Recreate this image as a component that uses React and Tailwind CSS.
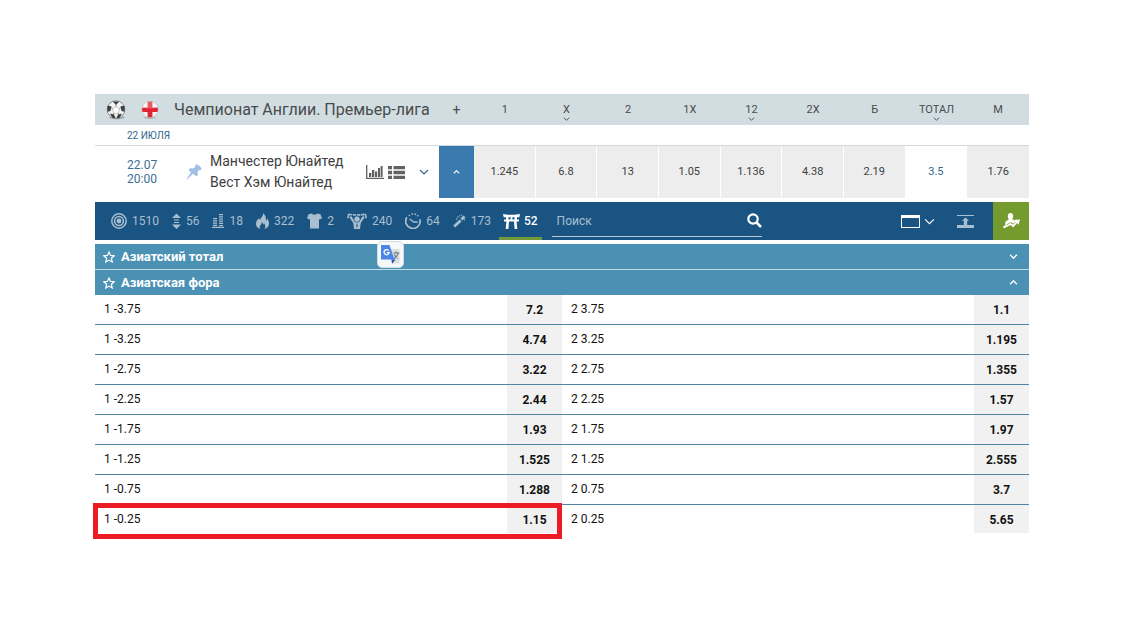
import React from 'react';

const columns = [
  { label: '1', odd: '1.245' },
  { label: 'X', odd: '6.8', menu: true },
  { label: '2', odd: '13' },
  { label: '1X', odd: '1.05' },
  { label: '12', odd: '1.136', menu: true },
  { label: '2X', odd: '4.38' },
  { label: 'Б', odd: '2.19' },
  { label: 'ТОТАЛ', odd: '3.5', menu: true, line: true },
  { label: 'М', odd: '1.76' },
];

const handicaps = [
  ['1 -3.75', '7.2', '2 3.75', '1.1'],
  ['1 -3.25', '4.74', '2 3.25', '1.195'],
  ['1 -2.75', '3.22', '2 2.75', '1.355'],
  ['1 -2.25', '2.44', '2 2.25', '1.57'],
  ['1 -1.75', '1.93', '2 1.75', '1.97'],
  ['1 -1.25', '1.525', '2 1.25', '2.555'],
  ['1 -0.75', '1.288', '2 0.75', '3.7'],
  ['1 -0.25', '1.15', '2 0.25', '5.65'],
];

function Chevron({ up = false, className = 'w-2.5 h-1.5', stroke = 1.4 }) {
  return (
    <svg viewBox="0 0 10 6" className={className} fill="none" stroke="currentColor" strokeWidth={stroke} aria-hidden="true">
      <path d={up ? 'M1 5L5 1L9 5' : 'M1 1L5 5L9 1'} />
    </svg>
  );
}

function BallIcon() {
  return (
    <svg viewBox="0 0 20 20" className="h-5 w-5" aria-hidden="true">
      <ellipse cx="11" cy="17.6" rx="8" ry="1.8" fill="#8e9698" opacity=".6" />
      <circle cx="10" cy="9.6" r="8.8" fill="#f4f4f4" stroke="#777" strokeWidth=".8" />
      <path d="M10 6.4l3.6 2.6-1.4 4.3H7.8L6.4 9z" fill="#fff" stroke="#aaa" strokeWidth=".6" />
      <path d="M6.6 1.4h6.800L10 5z M1.4 5.800L5.400 6.200 4.600 11 1.4 11.800z M18.600 5.800L14.600 6.200l.8 4.800 3.200.8z M4 13.800l3.800.2 1.800 4.200-3-.2z M16 13.800l-3.800.2-1.800 4.200 3-.2z" fill="#3e4244" />
      <path d="M10 4.4v2.2M5 7l1.6 2M15 7l-1.6 2M7.7 13.4L6.4 15M12.3 13.4l1.3 1.6" stroke="#777" strokeWidth=".8" />
    </svg>
  );
}

function EnglandIcon() {
  return (
    <svg viewBox="0 0 18 18" className="h-[18px] w-[18px]" aria-hidden="true">
      <ellipse cx="9" cy="16.8" rx="6" ry="1.1" fill="#98a4a8" opacity=".7" />
      <clipPath id="flag-round"><circle cx="9" cy="8.5" r="8.2" /></clipPath>
      <g clipPath="url(#flag-round)">
        <rect width="18" height="18" fill="#f2f2f2" />
        <path d="M6.600 0h4.800v18H6.600z M0 6.500h18v4.600H0z" fill="#e02431" />
        <path d="M0 0h18v6Q9 9 0 6z" fill="#fff" opacity=".25" />
      </g>
      <circle cx="9" cy="8.5" r="8.2" fill="none" stroke="#b9b9b9" strokeWidth=".6" />
    </svg>
  );
}

function PinIcon() {
  return (
    <svg viewBox="0 0 16 16" className="h-4 w-4" fill="#9fc0e2" aria-hidden="true">
      <path d="M9.600.8C10.700.2 12 .9 13.400 2c1.500 1.200 2.300 2.500 1.900 3.400-.3.600-1.300.700-2.200.600L11.500 8c.5 1.700.5 3.300-.4 4-.6.400-1.400 0-2.200-.7L6.900 9.800 1.100 15.500.4 15.300l4.700-7-1.300-1.100C2.800 6.300 2.500 5.500 3.100 4.900c.9-.9 2.300-.8 4-.3l2.300-1.800C9.200 2.100 9.100 1.200 9.600.8z" />
    </svg>
  );
}

function StatsIcon() {
  return (
    <svg viewBox="0 0 18 14" className="h-3.5 w-[18px]" aria-hidden="true">
      <path d="M.7 0v13.300H18" fill="none" stroke="#626262" strokeWidth="1.300" />
      <path d="M3 8h2.300v4H3z M6 5h2.300v7H6z M9 6.500h2.200V12H9z M12 3h2v9h-2z M14.600 1h2v11h-2z" fill="#626262" />
    </svg>
  );
}

function ListIcon() {
  return (
    <svg viewBox="0 0 17 13" className="h-[13px] w-[17px]" fill="#626262" aria-hidden="true">
      <path d="M0 0h4v3.300H0zM5.500 0H17v3.300H5.500zM0 4.800h4v3.400H0zM5.500 4.800H17v3.400H5.500zM0 9.700h4V13H0zM5.500 9.700H17V13H5.500z" />
    </svg>
  );
}

const TargetIcon = () => (
  <svg viewBox="0 0 16 16" className="h-4 w-4" fill="none" stroke="currentColor" strokeWidth="1.500" aria-hidden="true">
    <circle cx="8" cy="8" r="7.200" /><circle cx="8" cy="8" r="4.400" /><circle cx="8" cy="8" r="1.700" fill="currentColor" />
  </svg>
);
const UpDownIcon = () => (
  <svg viewBox="0 0 9 16" className="h-4 w-[9px]" fill="currentColor" aria-hidden="true">
    <path d="M4.500.5L9 5H0zM2 6.500h5v1.100H2zM2 9h5v1.100H2zM0 11.500h9L4.500 16z" />
  </svg>
);
const StackIcon = () => (
  <svg viewBox="0 0 12 14" className="h-3.5 w-3" fill="currentColor" aria-hidden="true">
    <path d="M1 4h4v1.200H1zM1 6.300h4v1.200H1zM1 8.600h4v1.200H1zM1 10.800h4V12H1zM7 0h4v1.200H7zM7 2.200h4v1.200H7zM7 4.400h4v1.200H7zM7 6.600h4v1.200H7zM7 8.800h4V10H7zM7 10.900h4V12H7zM0 12.800h12V14H0z" />
  </svg>
);
const FlameIcon = () => (
  <svg viewBox="0 0 13 16" className="h-4 w-[13px]" fill="currentColor" aria-hidden="true">
    <path d="M7 0c.3 2.200-.5 3.200-1.600 4.500C4.700 5.400 4.300 6 4.400 7 3.700 6.600 3.300 6 3.300 5 1.500 6.500 0 8.500 0 10.700 0 13.500 1.800 15.300 4.500 16c-1.200-1.200-1-2.600-.1-3.800.9-1.100 1.400-1.900 1.200-3.200 1 .7 1.600 1.600 1.500 2.800.6-.3.900-.9.900-1.500 1.200 1.600 2 3.900.5 5.700 2.700-.7 4.500-2.500 4.500-5.500 0-2-1-3.500-1.700-4.900-.1 1-.5 1.700-1.300 2.100C10.200 4.800 9.500 2 7 0z" />
  </svg>
);
const ShirtIcon = () => (
  <svg viewBox="0 0 15 16" className="h-4 w-[15px]" fill="currentColor" aria-hidden="true">
    <path d="M4.500.5C5.300 2 9.700 2 10.500.5L13.500 1.300 15 5.400 12 6.500V15.500H3V6.500L0 5.400 1.500 1.300z" />
  </svg>
);
const FanIcon = () => (
  <svg viewBox="0 0 20 16" className="h-4 w-5" aria-hidden="true">
    <path d="M1.500 1.200C6 2.200 14 2.200 18.500 1.200" fill="none" stroke="currentColor" strokeWidth="1.600" strokeDasharray="3.500 .7" />
    <path d="M1.600 1L.8 5.300M18.400 1l.8 4.300" stroke="currentColor" strokeWidth="1.500" />
    <path d="M3.200 3.600L7.800 10.200M16.800 3.600L12.200 10.200" fill="none" stroke="currentColor" strokeWidth="2.200" />
    <path d="M6.200 8.800h7.600L13 16H7z" fill="currentColor" />
    <circle cx="10" cy="6.200" r="3.100" fill="currentColor" stroke="#1a5482" strokeWidth=".7" />
    <path d="M9.400 10.800h1.200l.5 2.800-1.100 1.100-1.100-1.100z" fill="#1a5482" opacity=".6" />
  </svg>
);
const ClockIcon = () => (
  <svg viewBox="0 0 16 16" className="h-4 w-4" fill="none" stroke="currentColor" strokeWidth="1.700" aria-hidden="true">
    <path d="M1.900 4.300A7.200 7.200 0 1 0 14.800 6.200" />
    <path d="M4.700 6l4 3h4" strokeWidth="1.400" />
    <path d="M4 1.800l.7 1.200M7.300.2v1.500M10.500.5l-.5 1.400M13.300 2.200l-1 1.100" strokeWidth="1.500" />
  </svg>
);
const WandIcon = () => (
  <svg viewBox="0 0 13 14" className="h-3.5 w-[13px]" fill="none" stroke="currentColor" aria-hidden="true">
    <path d="M1.200 12.600l6.400-6.200" strokeWidth="2.800" /><path d="M8.400 5.600L11.500 2.600" strokeWidth="2.800" />
    <path d="M4 3h1.500M6.500 1.200l.5 1.300M9 .6l-.4 1M3 5h1.500M12 6l-1-.4" strokeWidth="1.100" />
  </svg>
);
const GateIcon = () => (
  <svg viewBox="0 0 17 15" className="h-[15px] w-[17px]" fill="currentColor" aria-hidden="true">
    <path d="M0 0C4 1 13 1 17 0L16.300 3.200H14V5.500H16V7.500H13.600L14.300 15H11.600L11 7.500H6L5.400 15H2.700L3.400 7.500H1V5.500H3V3.200H.7zM5.500 3.200V5.500H7.600V3.200zM9.400 3.200V5.500H11.500V3.200z" fillRule="evenodd" />
  </svg>
);

const groups = [
  { name: 'Все', Icon: TargetIcon, count: 1510 },
  { name: 'Тоталы', Icon: UpDownIcon, count: 56 },
  { name: 'Счёт', Icon: StackIcon, count: 18 },
  { name: 'Популярные', Icon: FlameIcon, count: 322 },
  { name: 'Игроки', Icon: ShirtIcon, count: 2 },
  { name: 'Команды', Icon: FanIcon, count: 240 },
  { name: 'Время', Icon: ClockIcon, count: 64 },
  { name: 'Особые', Icon: WandIcon, count: 173 },
  { name: 'Азиатские', Icon: GateIcon, count: 52, active: true },
];

function MatchTable() {
  return (
    <table className="w-full table-fixed border-separate border-spacing-0">
      <colgroup>
        <col className="w-[344px]" />
        <col className="w-[35px]" />
        {columns.map((c) => <col key={c.label} />)}
      </colgroup>
      <thead>
        <tr className="h-[31px] bg-[#d2dde1] text-[11px] text-[#484c4e]">
          <th className="p-0 font-normal">
            <div className="flex items-center pl-[11px]">
              <BallIcon />
              <span className="ml-[15px]"><EnglandIcon /></span>
              <span className="ml-[15px] whitespace-nowrap text-base leading-5">Чемпионат Англии. Премьер-лига</span>
            </div>
          </th>
          <th className="p-0 text-sm font-normal leading-4">+</th>
          {columns.map((c) => (
            <th key={c.label} className="p-0 font-normal">
              <div className="flex h-[31px] flex-col items-center pt-2 leading-[15px]">
                {c.label}
                {c.menu && <Chevron className="h-1 w-[7px]" stroke={1.4} />}
              </div>
            </th>
          ))}
        </tr>
      </thead>
      <tbody>
        <tr>
          <td colSpan={11} className="h-[21px] border-b border-[#d0dadf] p-0 pl-8 pt-px text-[10px] leading-[19px] text-[#2f6790]">22 ИЮЛЯ</td>
        </tr>
        <tr>
          <td className="p-0">
            <div className="flex items-center pl-8 pr-2.5">
              <time className="w-[59px] text-xs leading-[14px] text-[#3d6f95]">22.07<br />20:00</time>
              <PinIcon />
              <div className="ml-2 flex-1 whitespace-nowrap text-[14px] leading-[21px] text-[#404040]">
                Манчестер Юнайтед<br />Вест Хэм Юнайтед
              </div>
              <button aria-label="Статистика"><StatsIcon /></button>
              <button aria-label="Список" className="ml-1"><ListIcon /></button>
              <button aria-label="Подробнее" className="ml-3.5 text-[#34688e]"><Chevron stroke={1.2} /></button>
            </div>
          </td>
          <td className="p-0">
            <button aria-label="Свернуть" className="flex h-[52px] w-full items-center justify-center bg-[#3a7aae] text-white">
              <Chevron up className="h-1 w-[7px]" stroke={1.800} />
            </button>
          </td>
          {columns.map((c) => (
            <td key={c.label} className="border-r border-white p-0 text-[11px] last:border-r-0">
              <button className={c.line ? 'h-[52px] w-full bg-white pt-px text-[#2f6790]' : 'h-[52px] w-full bg-[#ededed] pt-px text-[#404040]'}>{c.odd}</button>
            </td>
          ))}
        </tr>
      </tbody>
    </table>
  );
}

function Toolbar() {
  return (
    <div className="mt-1 flex h-[38px] bg-[#1a5482] text-xs text-[#a9bfd0]">
      <nav className="flex gap-[3px] pl-[11px]">
        {groups.map(({ name, Icon, count, active }) => (
          <button
            key={name}
            aria-label={name}
            className={active
              ? 'flex items-center gap-1 border-y-[3px] border-t-transparent border-b-[#72993a] px-1 font-medium text-white'
              : 'flex items-center gap-[5px] px-[5px]'}
          >
            <Icon />{count}
          </button>
        ))}
      </nav>
      <label className="mb-[3px] ml-2.5 flex w-[210px] items-center border-b border-[#b3c7d6] pt-[3px]">
        <input type="search" placeholder="Поиск" aria-label="Поиск" className="min-w-0 flex-1 bg-transparent pl-[5px] text-xs outline-none placeholder:text-[#a9bfd0]" />
        <svg viewBox="0 0 15 15" className="h-[15px] w-[15px]" fill="none" stroke="#fff" strokeWidth="2.200" aria-hidden="true">
          <circle cx="6" cy="6" r="4.700" /><path d="M9.400 9.400l4.600 4.600" strokeWidth="2.600" />
        </svg>
      </label>
      <div className="ml-auto flex items-center">
        <button aria-label="Вид" className="flex items-center gap-1 text-white">
          <svg viewBox="0 0 19 13" className="h-[13px] w-[19px]" aria-hidden="true">
            <rect x=".5" y=".5" width="18" height="12" fill="none" stroke="currentColor" strokeWidth="1" />
            <path d="M0 0h19v3H0z" fill="currentColor" />
          </svg>
          <Chevron className="h-[7px] w-[11px]" stroke={1} />
        </button>
        <button aria-label="Наверх" className="ml-[22px]">
          <svg viewBox="0 0 17 13" className="h-[13px] w-[17px]" fill="currentColor" aria-hidden="true">
            <path d="M0 0h17v1H0zM8.500 2.500l3.500 3.200H10.200V10H17v3H0v-3h6.800V5.700H5z" />
          </svg>
        </button>
        <button aria-label="Профиль" className="ml-[19px] flex h-full w-9 items-center justify-center bg-[#759b2f] text-white">
          <svg viewBox="0 0 17 16" className="h-4 w-[17px]" aria-hidden="true">
            <path d="M7.500 0c2 0 2.900 1.400 2.700 3.200C10 4.600 9.500 5.400 9.400 6.300c.8.800 3 .8 3.900 2.200L10.600 11 8 9.500 2.400 12.500C2 10.500 2 8.800 3 8.200c1-.7 2.300-.8 2.700-1.900-.2-.9-.8-1.600-.9-3C4.700 1.400 5.600 0 7.500 0z" fill="#fff" />
            <path d="M.5 14.500l6.700-3.700 3 2 4-4.500" fill="none" stroke="#fff" strokeWidth="2.200" />
            <path d="M11 7l6-.6-1.400 5.400z" fill="#fff" />
            <path d="M3.500 12l4.200-2.500 2.500 1.700 1.800-2" fill="none" stroke="#759b2f" strokeWidth=".7" />
          </svg>
        </button>
      </div>
    </div>
  );
}

function SectionHead({ title, open = false }) {
  return (
    <button aria-expanded={open} className="flex h-[25px] w-full items-center bg-[#4b91b4] pl-2 pr-[11px] text-left text-[13px] font-bold text-white">
      <svg viewBox="0 0 12 12" className="mr-1.5 h-3 w-3" fill="none" stroke="currentColor" strokeWidth="1.200" aria-hidden="true">
        <path d="M6 1l1.500 3.400 3.700.4-2.800 2.500.8 3.700L6 9.100 2.800 11l.8-3.700L.8 4.800l3.700-.4z" />
      </svg>
      <span className="flex-1">{title}</span>
      <Chevron up={open} className="h-[5px] w-[9px]" stroke={1.700} />
    </button>
  );
}

function TranslateBadge() {
  return (
    <button aria-label="Перевести" className="absolute left-[282px] -top-[3px] flex h-[27px] w-[27px] items-center justify-center rounded-[5px] border border-[#cfdde6] bg-[#f6f7f9]">
      <svg viewBox="0 0 19 19" className="h-[19px] w-[19px]" aria-hidden="true">
        <path d="M7 4h11.500v14.500H11z" fill="#dcdfe2" />
        <path d="M10.500 14.500h4L11 18.800z" fill="#3047b5" />
        <path d="M0 0h8.500l5 14.500H0z" fill="#4a86e8" />
        <path d="M12.500 8h6M15.300 6.500V8M17.200 8c-.6 2.800-2.200 4.500-4 5.500M13.300 9.500c1 2 2.200 3.200 4 4" fill="none" stroke="#6b7479" strokeWidth="1.100" />
        <path d="M7.800 5.700A2.600 2.600 0 1 0 8.200 7.700H5.700" fill="none" stroke="#fff" strokeWidth="1.300" />
      </svg>
    </button>
  );
}

function HandicapTable() {
  return (
    <div className="relative">
      <table className="w-full table-fixed border-separate border-spacing-0 text-xs text-[#111]">
        <colgroup>
          <col /><col className="w-[55px]" /><col /><col className="w-[55px]" />
        </colgroup>
        <tbody>
          {handicaps.map(([home, homeOdd, away, awayOdd]) => (
            <tr key={home} className="group">
              <td className="h-[30px] border-b border-[#5384a3] p-0 pb-px pl-[9px] group-last:h-7 group-last:border-0">{home}</td>
              <td className="border-b border-[#5384a3] bg-[#f1f1f1] p-0 group-last:border-0">
                <button className="block w-full pt-px text-center font-bold leading-4">{homeOdd}</button>
              </td>
              <td className="border-b border-[#5384a3] p-0 pb-px pl-[9px] group-last:border-0">{away}</td>
              <td className="border-b border-[#5384a3] bg-[#f1f1f1] p-0 group-last:border-0">
                <button className="block w-full pt-px text-center font-bold leading-4">{awayOdd}</button>
              </td>
            </tr>
          ))}
        </tbody>
      </table>
      <div className="pointer-events-none absolute -bottom-1.5 -left-0.5 right-1/2 h-9 border-[5px] border-[#ec1c24]" />
    </div>
  );
}

export default function App() {
  return (
    <main className="min-h-screen bg-white pb-20 pl-[95px] pr-[92px] pt-[94px] font-['Roboto',sans-serif]">
      <MatchTable />
      <Toolbar />
      <section className="relative mt-1 flex flex-col">
        <SectionHead title="Азиатский тотал" />
        <div className="h-px bg-[#c3dbe6]" />
        <SectionHead title="Азиатская фора" open />
        <HandicapTable />
        <TranslateBadge />
      </section>
    </main>
  );
}
